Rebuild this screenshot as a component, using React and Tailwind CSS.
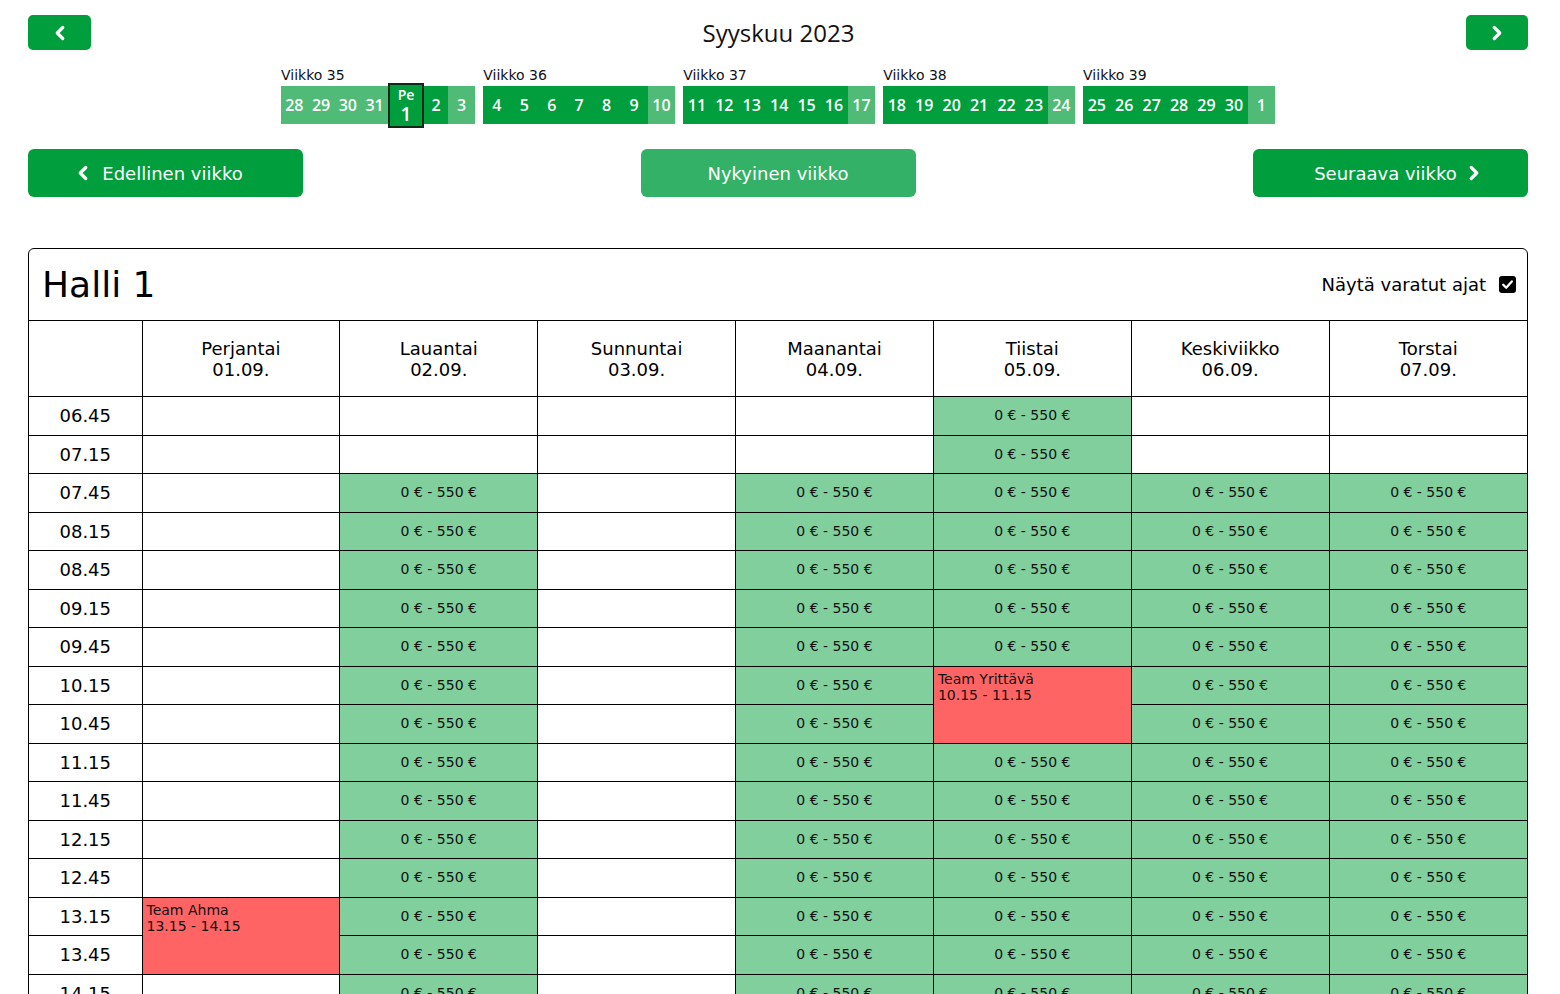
import { ChevronLeft, ChevronRight } from "lucide-react";

const WEEKS = [
    {
        label: "Viikko 35",
        days: [
            { d: "28", tone: "light", w: "w-[26.75px]" },
            { d: "29", tone: "light", w: "w-[26.75px]" },
            { d: "30", tone: "light", w: "w-[26.75px]" },
            { d: "31", tone: "light", w: "w-[26.75px]" },
            { d: "1", tone: "selected", w: "w-[36px]" },
            { d: "2", tone: "dark", w: "w-[24px]" },
            { d: "3", tone: "light", w: "w-[27.25px]" },
        ],
    },
    { label: "Viikko 36", days: ["4", "5", "6", "7", "8", "9", "10"] },
    { label: "Viikko 37", days: ["11", "12", "13", "14", "15", "16", "17"] },
    { label: "Viikko 38", days: ["18", "19", "20", "21", "22", "23", "24"] },
    { label: "Viikko 39", days: ["25", "26", "27", "28", "29", "30", "1"] },
];

const DAYS = [
    {
        name: "Perjantai",
        date: "01.09.",
        from: null,
        bookings: [{ start: "13.15", end: "14.15", team: "Team Ahma" }],
    },
    { name: "Lauantai", date: "02.09.", from: "07.45" },
    { name: "Sunnuntai", date: "03.09.", from: null },
    { name: "Maanantai", date: "04.09.", from: "07.45" },
    {
        name: "Tiistai",
        date: "05.09.",
        from: "06.45",
        bookings: [{ start: "10.15", end: "11.15", team: "Team Yrittävä" }],
    },
    { name: "Keskiviikko", date: "06.09.", from: "07.45" },
    { name: "Torstai", date: "07.09.", from: "07.45" },
];

const TIMES = [];
for (let m = 6 * 60 + 45; m <= 20 * 60 + 45; m += 30) {
    TIMES.push(
        `${String(Math.floor(m / 60)).padStart(2, "0")}.${String(m % 60).padStart(2, "0")}`
    );
}

const WeekStrip = ({ week }) => {
    const days = week.days.map((day, i) =>
        typeof day === "string"
            ? { d: day, tone: i === 6 ? "light" : "dark", w: "w-[27.43px]" }
            : day
    );

    return (
        <div className="flex flex-col">
            <span className="text-[14px] leading-[18px] text-[#111]">{week.label}</span>
            <div className="mt-[2px] flex h-[38px] items-center">
                {days.map((day, i) => {
                    if (day.tone === "selected") {
                        return (
                            <div
                                key={i}
                                className={`${day.w} flex h-[45px] flex-col items-center justify-center border-2 border-[#0e2a17] bg-[#009e3d] font-['Open_Sans',sans-serif] text-white`}
                            >
                                <span className="text-[14px] font-semibold leading-[18px]">Pe</span>
                                <span className="text-[19px] font-semibold leading-[20px]">{day.d}</span>
                            </div>
                        );
                    }
                    return (
                        <div
                            key={i}
                            className={`${day.w} flex h-full items-center justify-center font-['Open_Sans',sans-serif] text-[16px] font-semibold text-white ${
                                day.tone === "light" ? "bg-[#4fbb76]" : "bg-[#009e3d]"
                            }`}
                        >
                            {day.d}
                        </div>
                    );
                })}
            </div>
        </div>
    );
};

const App = () => {
    const renderCell = (day, time, dayIndex) => {
        const booking = (day.bookings || []).find(
            (b) => time >= b.start && time < b.end
        );
        if (booking) {
            if (booking.start !== time) return null;
            const span = TIMES.filter((t) => t >= booking.start && t < booking.end).length;
            return (
                <td
                    key={dayIndex}
                    rowSpan={span}
                    className="border-l border-t border-black bg-[#ff6464] px-[4px] pt-[4px] align-top text-[14px] leading-[16px] text-[#111]"
                >
                    <div>{booking.team}</div>
                    <div>
                        {booking.start} - {booking.end}
                    </div>
                </td>
            );
        }
        const free = day.from && time >= day.from;
        return (
            <td
                key={dayIndex}
                className={`border-l border-t border-black text-center text-[14px] text-[#111] ${
                    free ? "bg-[#80cf9d]" : "bg-white"
                }`}
            >
                {free ? "0 € - 550 €" : ""}
            </td>
        );
    };

    return (
        <main className="min-h-screen w-full bg-white pb-10 pl-[28px] pr-[32px] font-['DejaVu_Sans',sans-serif] text-black">
            {/* Month header */}
            <div className="flex items-center justify-between pt-[15px]">
                <button className="flex h-[35px] w-[63px] items-center justify-center rounded-[5px] bg-[#009e3d] text-white">
                    <ChevronLeft size={22} strokeWidth={3.5} />
                </button>
                <h1 className="font-['Open_Sans',sans-serif] text-[24px] leading-[35px] text-[#111]">
                    Syyskuu 2023
                </h1>
                <button className="flex h-[35px] w-[62px] items-center justify-center rounded-[5px] bg-[#009e3d] text-white">
                    <ChevronRight size={22} strokeWidth={3.5} />
                </button>
            </div>

            {/* Weeks */}
            <div className="mt-[16px] flex justify-center gap-[8px]">
                {WEEKS.map((week) => (
                    <WeekStrip key={week.label} week={week} />
                ))}
            </div>

            {/* Week navigation */}
            <div className="mt-[25px] flex justify-between">
                <button className="flex h-[48px] w-[275px] items-center justify-center gap-[8px] rounded-[6px] bg-[#009e3d] pr-[16px] text-[18px] text-white">
                    <ChevronLeft size={22} strokeWidth={3.5} />
                    Edellinen viikko
                </button>
                <button className="flex h-[48px] w-[275px] items-center justify-center rounded-[6px] bg-[#33b166] text-[18px] text-white">
                    Nykyinen viikko
                </button>
                <button className="flex h-[48px] w-[275px] items-center justify-center gap-[6px] rounded-[6px] bg-[#009e3d] pl-[18px] text-[18px] text-white">
                    Seuraava viikko
                    <ChevronRight size={22} strokeWidth={3.5} />
                </button>
            </div>

            {/* Hall calendar */}
            <div className="mt-[51px] rounded-t-[6px] border border-black">
                <div className="flex h-[71px] items-center justify-between pl-[13px] pr-[11px]">
                    <h2 className="text-[36px] leading-none">Halli 1</h2>
                    <label className="flex items-center gap-[13px] text-[18px]">
                        Näytä varatut ajat
                        <svg width="17" height="17" viewBox="0 0 17 17">
                            <rect width="17" height="17" rx="3" fill="#000" />
                            <polyline
                                points="4.2,8.8 7.2,11.8 12.8,5.4"
                                fill="none"
                                stroke="#fff"
                                strokeWidth="2.3"
                                strokeLinecap="round"
                                strokeLinejoin="round"
                            />
                        </svg>
                    </label>
                </div>

                <table className="w-full table-fixed border-collapse">
                    <colgroup>
                        <col className="w-[113px]" />
                        {DAYS.map((day) => (
                            <col key={day.name} />
                        ))}
                    </colgroup>
                    <thead>
                        <tr className="h-[76px]">
                            <th className="border-t border-black" />
                            {DAYS.map((day) => (
                                <th
                                    key={day.name}
                                    className="border-l border-t border-black text-center text-[18px] font-normal leading-[21px]"
                                >
                                    <div>{day.name}</div>
                                    <div>{day.date}</div>
                                </th>
                            ))}
                        </tr>
                    </thead>
                    <tbody>
                        {TIMES.map((time) => (
                            <tr key={time} className="h-[38.5px]">
                                <td className="border-t border-black text-center text-[18px]">
                                    {time}
                                </td>
                                {DAYS.map((day, i) => renderCell(day, time, i))}
                            </tr>
                        ))}
                    </tbody>
                </table>
            </div>
        </main>
    );
};

export default App;
